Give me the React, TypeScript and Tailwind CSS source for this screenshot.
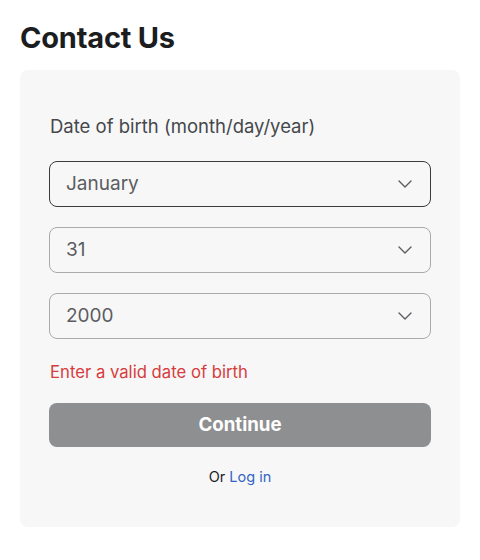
const fields = [
  { value: "January", focused: true },
  { value: "31", focused: false },
  { value: "2000", focused: false },
];

function Chevron() {
  return (
    <svg width="14" height="8" viewBox="0 0 14 8" fill="none" className="text-[#5b5d60]">
      <path d="M1 1l6 6 6-6" stroke="currentColor" strokeWidth="1.4" strokeLinecap="round" strokeLinejoin="round" />
    </svg>
  );
}

function Select({ value, focused }: { value: string; focused: boolean }) {
  return (
    <div
      className={
        "flex h-[46px] items-center justify-between rounded-lg border pl-4 pr-[18px] " +
        (focused ? "border-[#393b3d]" : "border-[#a9abae]")
      }
    >
      <span className="text-[19px] text-[#5b5d60]">{value}</span>
      <Chevron />
    </div>
  );
}

export default function App() {
  return (
    <div className="min-h-[560px] bg-white px-5 pt-[19px] font-['Inter',sans-serif]">
      <h1 className="text-[29px] font-bold leading-[38px] tracking-[-0.2px] text-[#1c1d1f]">
        Contact Us
      </h1>
      <div className="mt-[13px] rounded-lg bg-[#f7f7f8] px-[29px] pb-[40px] pt-[44px]">
        <p className="pl-px text-[18.5px] leading-6 text-[#45474a]">
          Date of birth (month/day/year)
        </p>
        <div className="mt-[23px] flex flex-col gap-5">
          {fields.map((f) => (
            <Select key={f.value} value={f.value} focused={f.focused} />
          ))}
        </div>
        <p className="mt-[21px] pl-px text-[16.7px] leading-6 text-[#d63c3c]">
          Enter a valid date of birth
        </p>
        <button className="mt-[19px] flex h-[44px] w-full items-center justify-center rounded-lg bg-[#8e8f91] text-[18.7px] font-bold text-white">
          Continue
        </button>
        <p className="mt-5 text-center text-[14.5px] leading-5 text-[#1c1d1f]">
          Or <span className="text-[#3465c4]">Log in</span>
        </p>
      </div>
    </div>
  );
}
